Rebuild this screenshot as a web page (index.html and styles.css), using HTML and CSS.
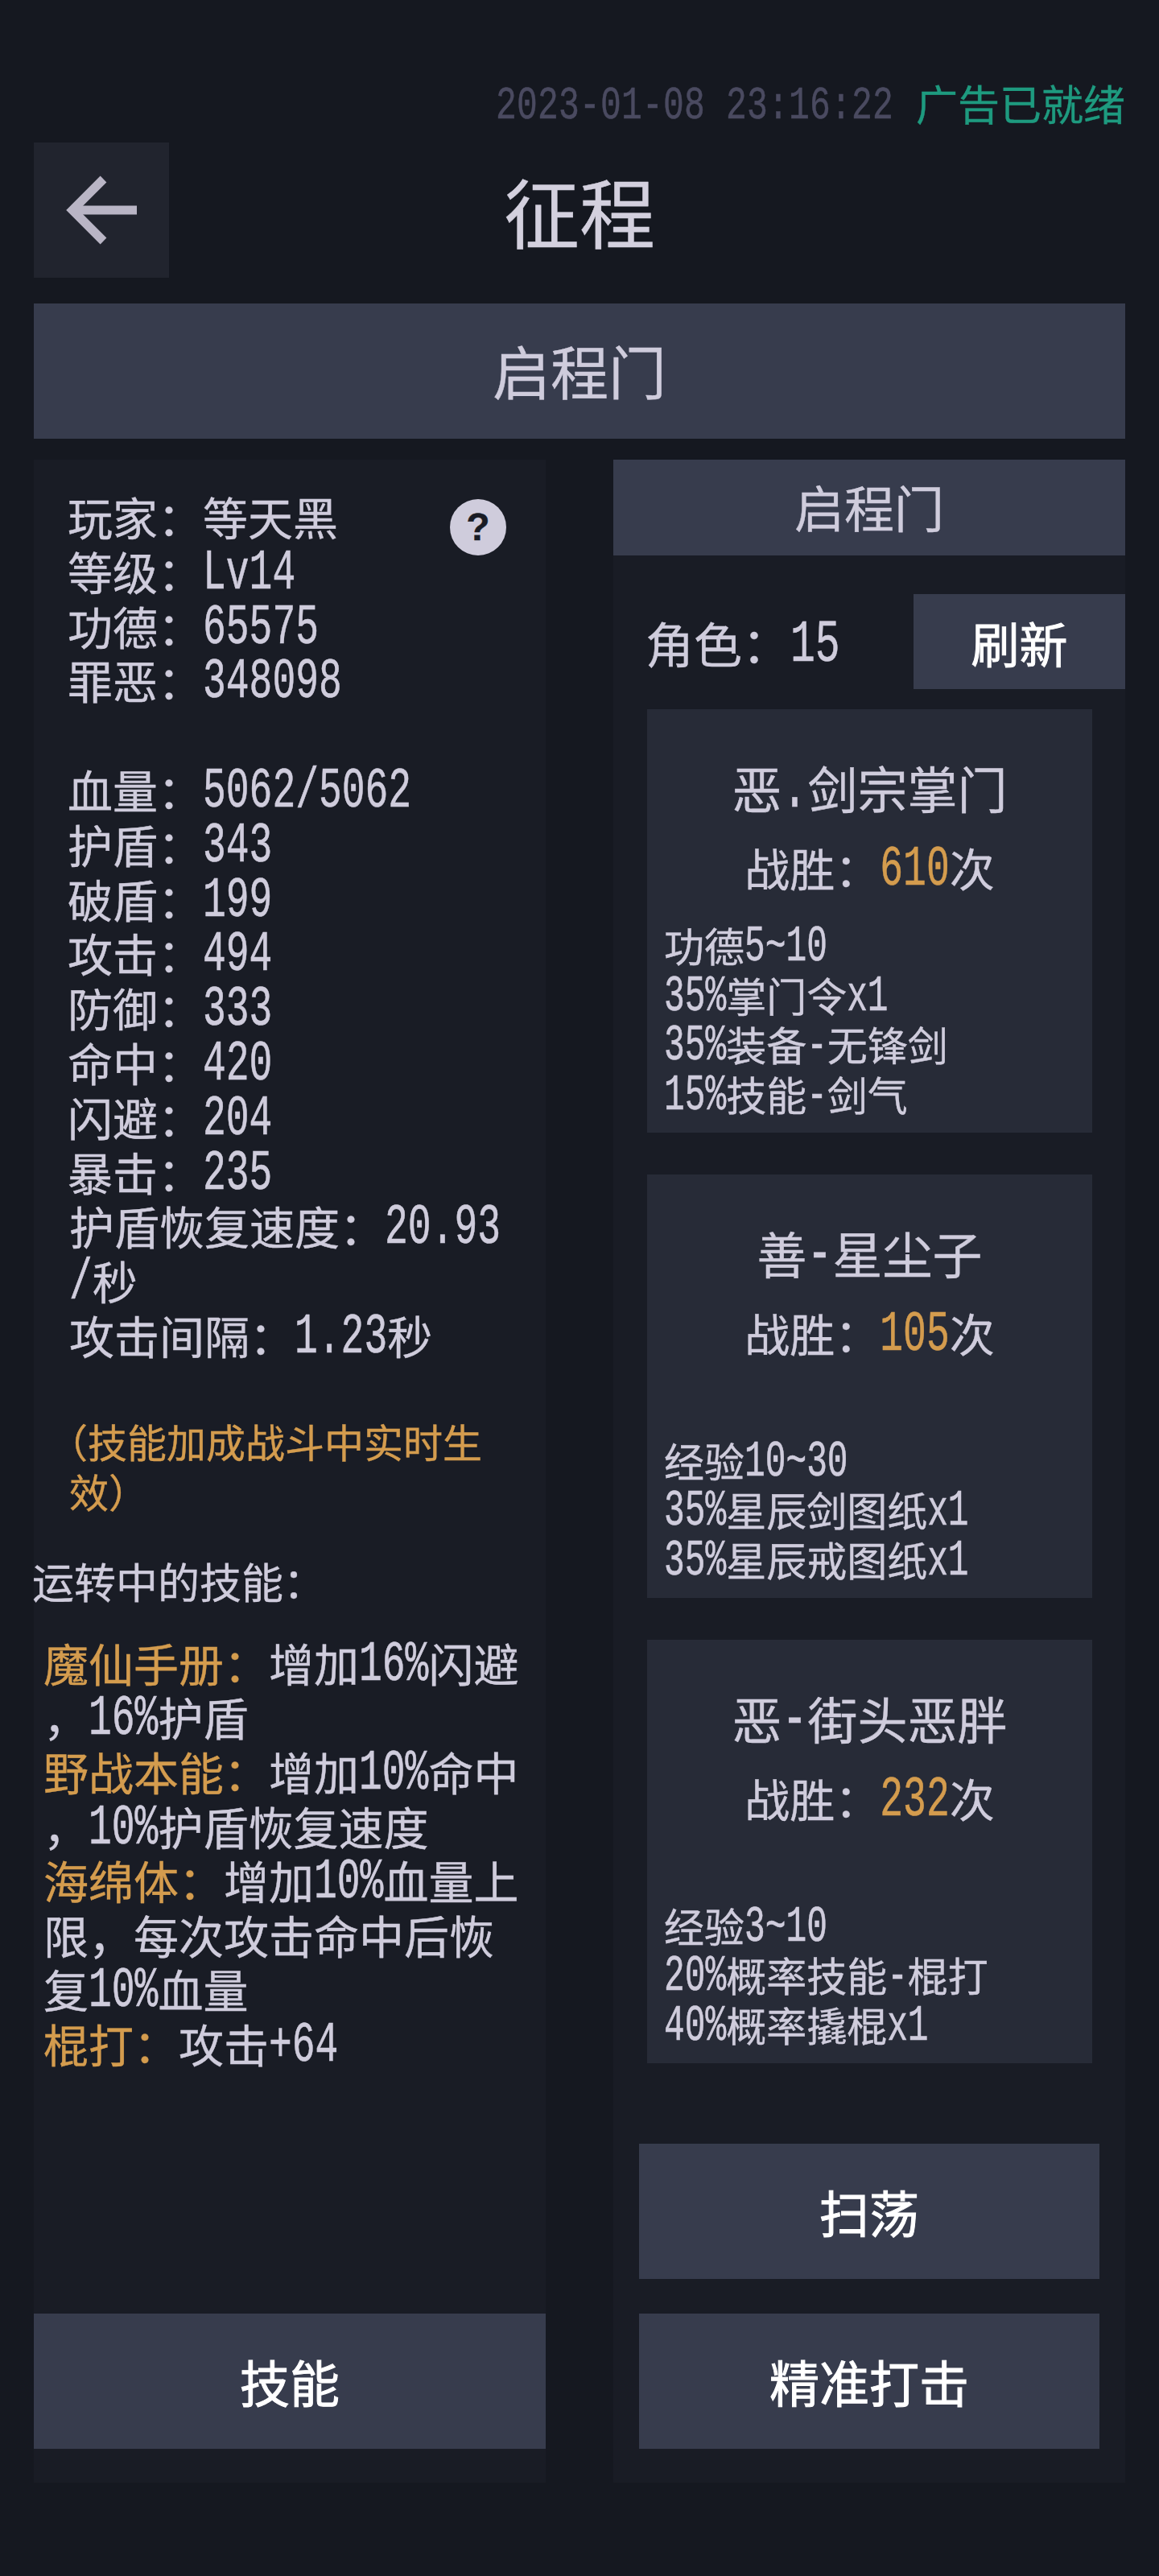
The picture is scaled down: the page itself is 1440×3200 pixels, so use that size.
FILE: index.html
```html
<!DOCTYPE html>
<html lang="zh-CN">
<head>
<meta charset="utf-8">
<title>征程</title>
<link rel="stylesheet" href="styles.css">
</head>
<body>
<div class="page">
  <div class="status"><span class="time">2023-01-08 23:16:22</span><span class="ad">广告已就绪</span></div>
  <div class="head">
    <button class="back" aria-label="返回">
      <svg width="88" height="86" viewBox="0 0 88 86"><path d="M46.5 4.5 L8 43 L46.5 81.5" class="arrow"/><path d="M10 43 H88" class="arrow"/></svg>
    </button>
    <h1 class="title">征程</h1>
  </div>
  <div class="bar">启程门</div>
  <div class="cols">
    <section class="panel left">
      <span class="help">?</span>
      <div class="stats">
        <div>玩家：等天黑</div>
        <div>等级：<span class="n">Lv14</span></div>
        <div>功德：<span class="n">65575</span></div>
        <div>罪恶：<span class="n">348098</span></div>
        <div class="gap"></div>
        <div>血量：<span class="n">5062/5062</span></div>
        <div>护盾：<span class="n">343</span></div>
        <div>破盾：<span class="n">199</span></div>
        <div>攻击：<span class="n">494</span></div>
        <div>防御：<span class="n">333</span></div>
        <div>命中：<span class="n">420</span></div>
        <div>闪避：<span class="n">204</span></div>
        <div>暴击：<span class="n">235</span></div>
        <div class="minor">护盾恢复速度：<span class="n">20.93</span><br><span class="n">/</span>秒</div>
        <div class="minor">攻击间隔：<span class="n">1.23</span>秒</div>
      </div>
      <p class="note">（技能加成战斗中实时生效）</p>
      <p class="running">运转中的技能：</p>
      <div class="skills">
        <em>魔仙手册：</em>增加<span class="n">16%</span>闪避<br>，<span class="n">16%</span>护盾<br>
        <em>野战本能：</em>增加<span class="n">10%</span>命中<br>，<span class="n">10%</span>护盾恢复速度<br>
        <em>海绵体：</em>增加<span class="n">10%</span>血量上<br>限，每次攻击命中后恢<br>复<span class="n">10%</span>血量<br>
        <em>棍打：</em>攻击<span class="n">+64</span>
      </div>
      <button class="btn wide">技能</button>
    </section>
    <section class="panel right">
      <div class="subbar">启程门</div>
      <div class="roster"><span class="count">角色：<span class="n">15</span></span><button class="refresh">刷新</button></div>
      <article class="card">
        <h2>恶<span class="n">.</span>剑宗掌门</h2>
        <div class="wins">战胜：<b class="n">610</b>次</div>
        <ul>
          <li>功德<span class="n">5~10</span></li>
          <li><span class="n">35%</span>掌门令<span class="n">x1</span></li>
          <li><span class="n">35%</span>装备<span class="n">-</span>无锋剑</li>
          <li><span class="n">15%</span>技能<span class="n">-</span>剑气</li>
        </ul>
      </article>
      <article class="card">
        <h2>善<span class="n">-</span>星尘子</h2>
        <div class="wins">战胜：<b class="n">105</b>次</div>
        <ul>
          <li>经验<span class="n">10~30</span></li>
          <li><span class="n">35%</span>星辰剑图纸<span class="n">x1</span></li>
          <li><span class="n">35%</span>星辰戒图纸<span class="n">x1</span></li>
        </ul>
      </article>
      <article class="card">
        <h2>恶<span class="n">-</span>街头恶胖</h2>
        <div class="wins">战胜：<b class="n">232</b>次</div>
        <ul>
          <li>经验<span class="n">3~10</span></li>
          <li><span class="n">20%</span>概率技能<span class="n">-</span>棍打</li>
          <li><span class="n">40%</span>概率撬棍<span class="n">x1</span></li>
        </ul>
      </article>
      <div class="actions">
        <button class="btn">扫荡</button>
        <button class="btn">精准打击</button>
      </div>
    </section>
  </div>
</div>
</body>
</html>
```
FILE: styles.css
```css
* { box-sizing: border-box; }
html, body { margin: 0; padding: 0; }
body {
  background: #151820;
  color: #cfccdc;
  font-family: "Noto Sans CJK SC", "Liberation Sans", sans-serif;
  -webkit-text-stroke: 0.4px currentColor;
  width: 1440px;
  height: 3200px;
  overflow: hidden;
}
button { font-family: inherit; border: 0; padding: 0; margin: 0; }
h1, h2, p, ul { margin: 0; padding: 0; font-weight: 400; }
.page { padding: 96px 42px 0; }

/* Latin and digits of the original pixel font are one tall, narrow cell each. */
.n {
  display: inline-block;
  font-family: "Liberation Mono", monospace;
  font-size: 0.857em;
  line-height: 0.8;
  font-weight: 400;
  white-space: nowrap;
  transform-origin: 50% 83%;
  transform: translateY(-0.05em) scaleY(1.45);
}

.status {
  height: 70px;
  margin-bottom: 11px;
  display: flex;
  justify-content: flex-end;
  align-items: center;
  gap: 28px;
}
.time {
  font-family: "Liberation Mono", monospace;
  font-size: 43px;
  letter-spacing: 0.2px;
  line-height: 1;
  color: #4a4a60;
  transform: scaleY(1.35);
}
.ad { font-size: 52px; line-height: 1; color: #1e9a7f; position: relative; top: -3px; }

.head { height: 168px; position: relative; display: flex; align-items: center; }
.back {
  width: 168px;
  height: 168px;
  background: #21242e;
  display: flex;
  align-items: center;
  justify-content: center;
}
.arrow { fill: none; stroke: #b9b5c5; stroke-width: 11; }
.title {
  position: absolute;
  left: 0;
  right: 0;
  text-align: center;
  font-size: 94px;
  line-height: 152px;
  color: #d3d0de;
  pointer-events: none;
}

.bar {
  margin-top: 32px;
  height: 168px;
  background: #373c4d;
  font-size: 72px;
  line-height: 164px;
  text-align: center;
}

.cols { margin-top: 26px; display: flex; justify-content: space-between; }
.panel {
  width: 636px;
  height: 2513px;
  background: #191c25;
  display: flex;
  flex-direction: column;
  position: relative;
}

.help {
  position: absolute;
  top: 49px;
  left: 517px;
  width: 70px;
  height: 70px;
  border-radius: 50%;
  background: #cfccdc;
  color: #191c25;
  font-family: "Liberation Sans", sans-serif;
  font-weight: 700;
  font-size: 48px;
  line-height: 70px;
  text-align: center;
}

.stats { padding: 36px 0 0 42px; font-size: 56px; line-height: 67.8px; }
.gap { height: 67.8px; }
.minor { padding-left: 2px; }

.note {
  margin-top: 67px;
  padding: 0 20px 0 44px;
  text-indent: -26px;
  font-size: 49px;
  line-height: 62px;
  color: #d49c4e;
}
.running { margin-top: 50px; font-size: 52px; line-height: 62px; margin-left: -2px; }
.skills { margin-top: 36px; padding-left: 12px; font-size: 56px; line-height: 67.6px; white-space: nowrap; }
.skills em { font-style: normal; color: #d49c4e; }

.btn {
  height: 168px;
  background: #373c4d;
  color: #fff;
  font-size: 62px;
  -webkit-text-stroke: 1px #fff;
  display: block;
}
.wide { width: 636px; margin-top: auto; margin-bottom: 42px; }

.subbar {
  height: 119px;
  background: #373c4d;
  font-size: 62px;
  line-height: 117px;
  text-align: center;
}
.roster {
  margin-top: 48px;
  height: 118px;
  display: flex;
  justify-content: space-between;
  align-items: center;
}
.count { font-size: 60px; padding-left: 40px; }
.refresh {
  width: 263px;
  height: 118px;
  background: #373c4d;
  color: #fff;
  font-size: 60px;
  -webkit-text-stroke: 1px #fff;
}

.card {
  width: 553px;
  height: 526px;
  margin: 25px 0 0 42px;
  padding: 0 0 18px 21px;
  background: #272b37;
  display: flex;
  flex-direction: column;
  overflow: hidden;
}
.card + .card { margin-top: 52px; }
.card h2 { margin-top: 52px; padding-right: 21px; font-size: 62px; line-height: 90px; text-align: center; }
.wins { margin-top: 12px; padding-right: 21px; font-size: 56px; line-height: 84px; text-align: center; }
.wins b { color: #d49c4e; }
.card ul { list-style: none; margin-top: auto; font-size: 50px; line-height: 61.5px; white-space: nowrap; }

.actions { margin-top: auto; margin-bottom: 42px; display: flex; flex-direction: column; align-items: center; gap: 43px; }
.actions .btn { width: 572px; }
```
